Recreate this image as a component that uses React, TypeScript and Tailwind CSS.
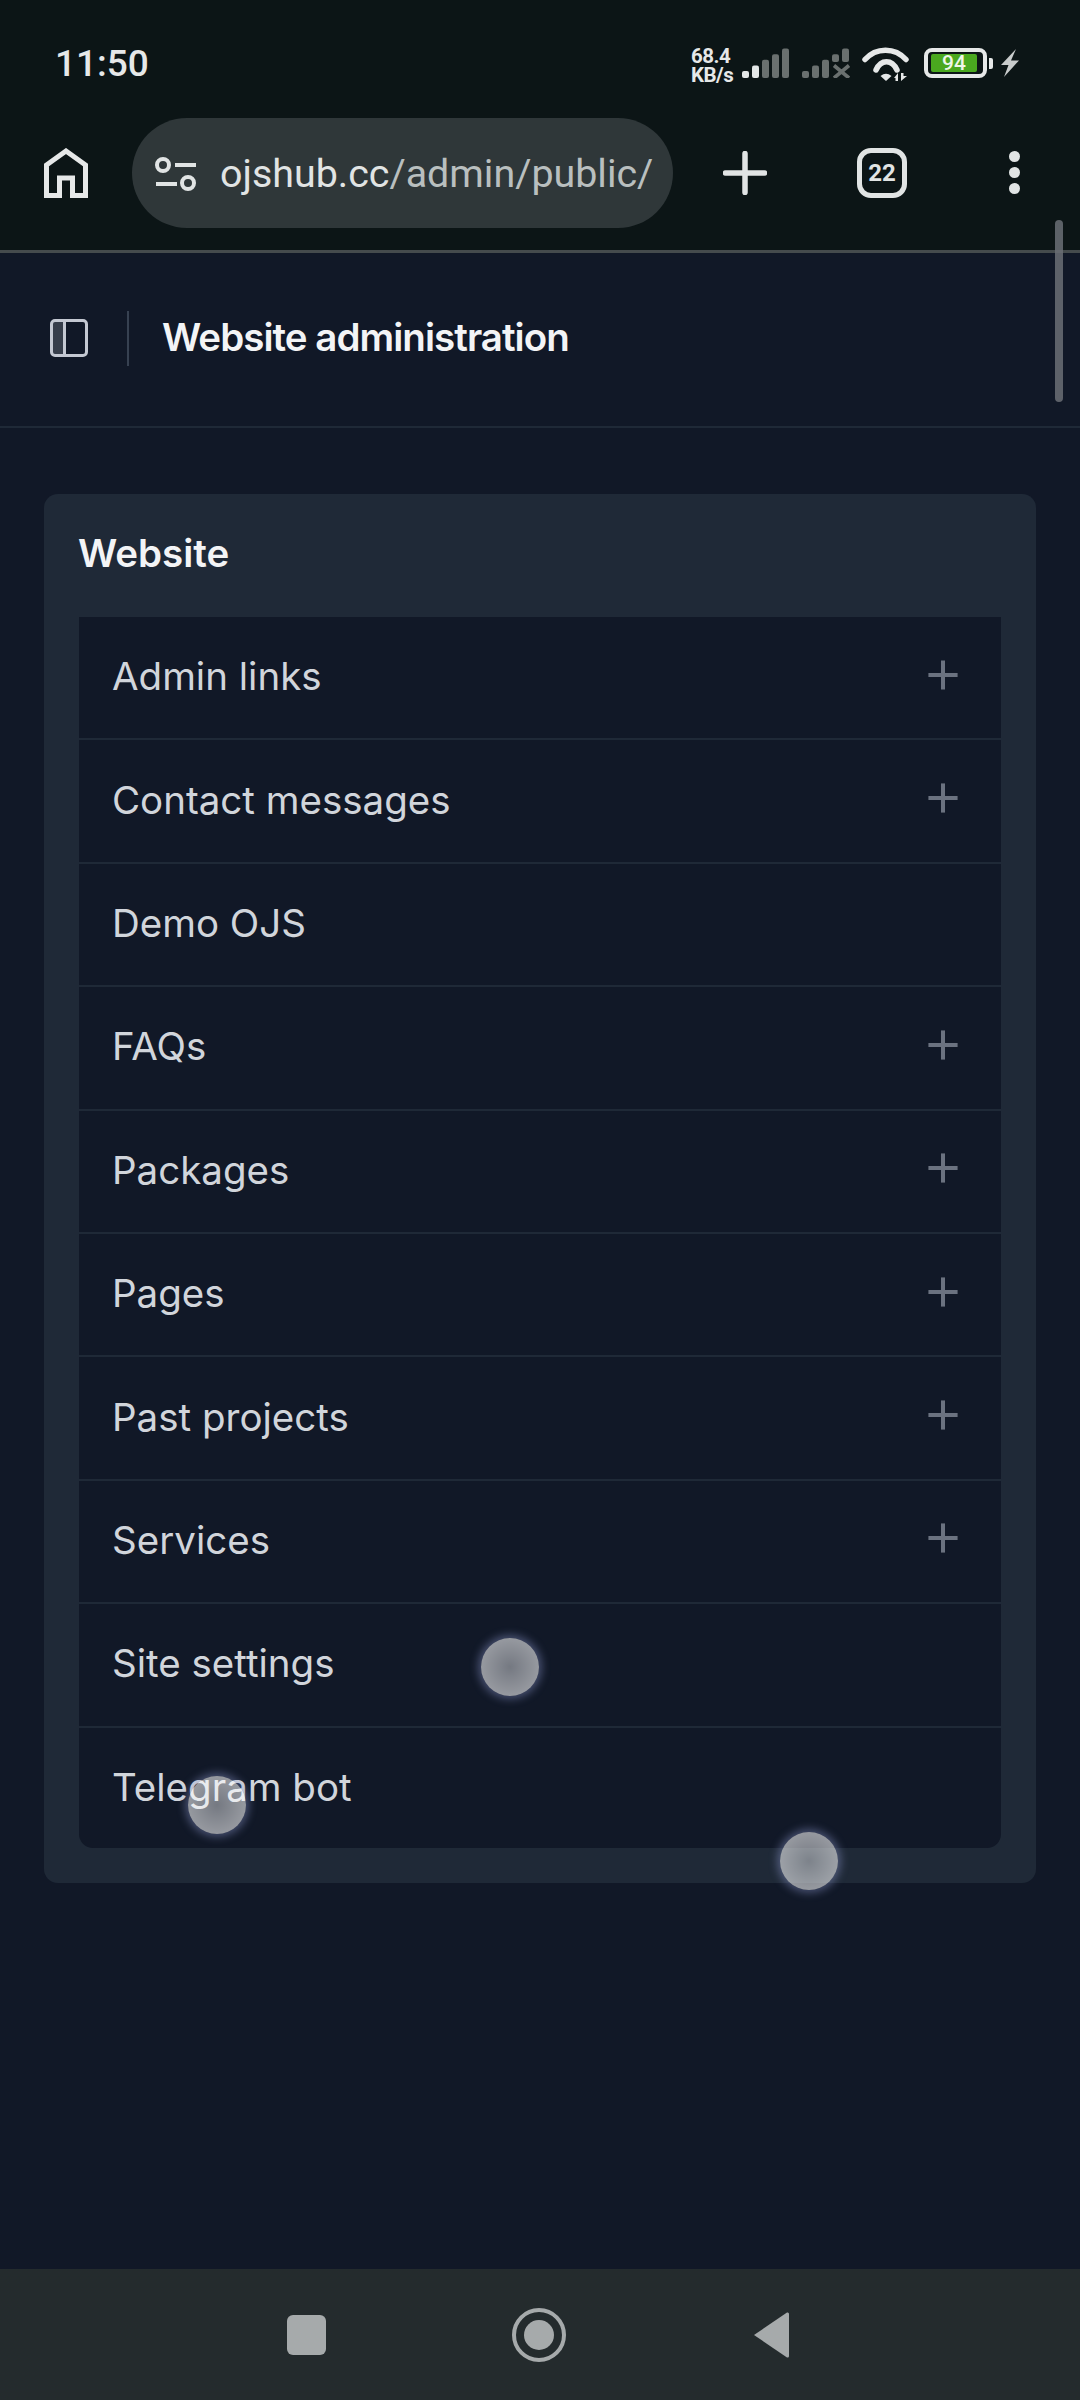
import { Plus } from "lucide-react";

const rows = [
  { label: "Admin links", add: true },
  { label: "Contact messages", add: true },
  { label: "Demo OJS", add: false },
  { label: "FAQs", add: true },
  { label: "Packages", add: true },
  { label: "Pages", add: true },
  { label: "Past projects", add: true },
  { label: "Services", add: true },
  { label: "Site settings", add: false },
  { label: "Telegram bot", add: false },
];

const Bars = ({ lit, crossed }: { lit: number; crossed?: boolean }) => (
  <svg width="50" height="30" viewBox="0 0 50 30" className="block shrink-0">
    {[0, 1, 2, 3, 4].map((i) => {
      const h = 7 + i * 5.6;
      const short = crossed && i > 2;
      const top = 30 - h;
      return (
        <rect
          key={i}
          x={i * 10}
          y={top}
          width="7"
          height={short ? 14 - top : h}
          rx="2"
          fill={i < lit ? "#e4e7e7" : "#6a706f"}
        />
      );
    })}
    {crossed && (
      <path d="M32 17.5 L47 30 M47 17.5 L32 30" stroke="#6a706f" strokeWidth="3.6" />
    )}
  </svg>
);

const StatusBar = () => (
  <div className="h-[118px] flex items-start justify-between pl-[55px] pr-[60px]">
    <span className="mt-[42px] text-[37px] leading-[44px] font-medium text-[#e6e8e8] font-['Roboto',sans-serif]">
      11:50
    </span>
    <div className="mt-[47px] flex items-start">
      <div className="w-[41px] flex flex-col text-[20.5px] leading-[19px] font-bold tracking-[-0.5px] whitespace-nowrap text-[#e6e8e8] font-['Roboto',sans-serif]">
        <span>68.4</span>
        <span>KB/s</span>
      </div>
      <div className="ml-[10px] mt-[1px]">
        <Bars lit={2} />
      </div>
      <div className="ml-[10px] mt-[1px]">
        <Bars lit={0} crossed />
      </div>
      <svg width="50" height="34" viewBox="0 0 50 34" fill="none" className="ml-[10px] shrink-0">
        <path d="M3 12.5 C14 0 33 0 44 12.5" stroke="#e6e8e8" strokeWidth="5.5" strokeLinecap="round" />
        <path d="M14 23 C19 12 30 12 35 23" stroke="#e6e8e8" strokeWidth="5.5" strokeLinecap="round" />
        <path d="M18.5 29 Q24 24.5 29.5 29 L24 34 Z" fill="#e6e8e8" />
        <path d="M32 31 L36 26 L36 34 L33.5 34 L33.5 31 Z M39 26 L41.5 26 L41.5 29 L45 29 L39 34 Z" fill="#e6e8e8" />
      </svg>
      <div className="ml-[12px] mt-[1px] flex items-center gap-[2px] shrink-0">
        <div className="w-[63px] h-[30px] rounded-[8px] border-[4px] border-[#e6e8e8] pl-[3px] py-[2px]">
          <div className="h-full w-[46px] rounded-[2px] bg-[#4aa81f] flex items-center justify-center text-[21px] leading-none font-medium text-[#eef6e8] font-['Roboto',sans-serif]">
            94
          </div>
        </div>
        <div className="w-[4px] h-[11px] rounded-r-[2px] bg-[#e6e8e8]" />
      </div>
      <svg width="20" height="30" viewBox="0 0 20 30" className="ml-[7px] mt-[1px] shrink-0">
        <path d="M16 1 L1 17 H8.5 L4 29 L19 12.5 H11 Z" fill="#c9cccc" />
      </svg>
    </div>
  </div>
);

const Toolbar = () => (
  <div className="h-[132px] flex items-start pl-[44px]">
    <svg width="44" height="50" viewBox="0 0 44 50" fill="none" className="mt-[30px] shrink-0">
      <path
        d="M2.5 47.5 V17 L22 3 L41.5 17 V47.5 H28.5 V30 H15.5 V47.5 Z"
        stroke="#e6e8e8"
        strokeWidth="5"
      />
    </svg>
    <div className="ml-[44px] w-[541px] h-[110px] rounded-full bg-[#2f3739] flex items-center pl-[23px] pt-[1px] shrink-0">
      <svg width="42" height="34" viewBox="0 0 42 34" fill="none" className="shrink-0">
        <circle cx="8" cy="8" r="6" stroke="#e1e4e4" strokeWidth="4" />
        <path d="M20 8 H41 M1 27 H22" stroke="#e1e4e4" strokeWidth="4" />
        <circle cx="33" cy="26" r="6" stroke="#e1e4e4" strokeWidth="4" />
      </svg>
      <span className="ml-[23px] text-[39.4px] leading-none text-[#b9bfbf] whitespace-nowrap font-['Roboto',sans-serif]">
        <span className="text-[#e1e4e4]">ojshub.cc</span>/admin/public/
      </span>
    </div>
    <div className="ml-[50px] mt-[33px] shrink-0">
      <svg width="44" height="44" viewBox="0 0 44 44" fill="none">
        <path d="M22 2.5 V41.5 M2.5 22 H41.5" stroke="#e1e4e4" strokeWidth="5.5" strokeLinecap="round" />
      </svg>
    </div>
    <div className="ml-[90px] mt-[30px] w-[50px] h-[50px] rounded-[14px] border-[5px] border-[#e1e4e4] flex items-center justify-center text-[24px] font-bold text-[#e1e4e4] font-['Roboto',sans-serif] shrink-0">
      22
    </div>
    <div className="ml-[102px] mt-[33px] flex flex-col gap-[5px] shrink-0">
      <div className="w-[11px] h-[11px] rounded-full bg-[#e1e4e4]" />
      <div className="w-[11px] h-[11px] rounded-full bg-[#e1e4e4]" />
      <div className="w-[11px] h-[11px] rounded-full bg-[#e1e4e4]" />
    </div>
  </div>
);

const Touch = ({ className }: { className: string }) => (
  <div
    className={`absolute w-[58px] h-[58px] rounded-full bg-[radial-gradient(circle,rgba(255,255,255,0.42)_0%,rgba(255,255,255,0.62)_100%)] shadow-[0_0_9px_3px_rgba(140,150,205,0.45)] ${className}`}
  />
);

export default function App() {
  return (
    <div className="relative w-[1080px] h-[2400px] overflow-hidden flex flex-col bg-[#111827] font-['Inter',sans-serif]">
      <div className="bg-[#0c1516] shrink-0">
        <StatusBar />
        <Toolbar />
      </div>

      <main className="flex-1 border-t-[3px] border-[#454b4d]">
        <header className="h-[175px] border-b-[2px] border-[#1f2937] flex items-center pl-[50px] pb-[3px]">
          <svg width="38" height="38" viewBox="0 0 38 38" fill="none" className="shrink-0">
            <rect x="1.5" y="1.5" width="35" height="35" rx="3.5" stroke="#c4c8d2" strokeWidth="3" />
            <path d="M14.5 2 V36" stroke="#c4c8d2" strokeWidth="3" />
            <rect x="3" y="3" width="10" height="32" fill="#d1d5db" fillOpacity="0.2" />
          </svg>
          <div className="ml-[39px] w-[2px] h-[55px] bg-[#374151]" />
          <h1 className="ml-[33px] -mt-[2px] text-[38.5px] leading-none font-semibold tracking-tight text-[#f3f4f6]">
            Website administration
          </h1>
        </header>

        <section className="mt-[66px] mx-[44px] rounded-[14px] bg-[#1f2937] p-[35px] pt-0">
          <h2 className="-ml-[1px] h-[123px] flex items-center pb-[4px] text-[38.5px] leading-none font-semibold text-[#f3f4f6]">
            Website
          </h2>
          <ul className="rounded-[14px] rounded-t-none bg-[#111827] overflow-hidden divide-y-[2px] divide-[#1f2937]">
            {rows.map((r) => (
              <li
                key={r.label}
                className="h-[123.4px] last:h-[120.5px] pb-[1px] last:pb-0 last:pt-[1px] flex items-center justify-between px-[33px] text-[38.5px] text-[#d1d5db]"
              >
                <span>{r.label}</span>
                {r.add && (
                  <Plus size={50} strokeWidth={1.93} strokeLinecap="butt" className="-mt-[5px] text-[#6b7280]" />
                )}
              </li>
            ))}
          </ul>
        </section>
      </main>

      <nav className="h-[131px] shrink-0 bg-[#242b2d] flex items-start pt-[39px] pl-[287px]">
        <div className="mt-[7px] w-[39px] h-[40px] rounded-[6px] bg-[#a6aaab]" />
        <svg width="54" height="54" viewBox="0 0 54 54" className="ml-[186px] shrink-0">
          <circle cx="27" cy="27" r="25" fill="none" stroke="#a6aaab" strokeWidth="4" />
          <circle cx="27" cy="27" r="15" fill="#a6aaab" />
        </svg>
        <svg width="38" height="48" viewBox="0 0 38 48" className="ml-[186px] mt-[3px] shrink-0">
          <path d="M2 24 L35 1.5 Q37 1 37 3 V45 Q37 47 35 46.5 L2 24 Z" fill="#a6aaab" />
        </svg>
      </nav>

      <div className="absolute left-[1055px] top-[220px] w-[8px] h-[182px] rounded-full bg-[#6b6f76]/85" />
      <Touch className="left-[481px] top-[1638px]" />
      <Touch className="left-[188px] top-[1776px]" />
      <Touch className="left-[780px] top-[1832px]" />
    </div>
  );
}
